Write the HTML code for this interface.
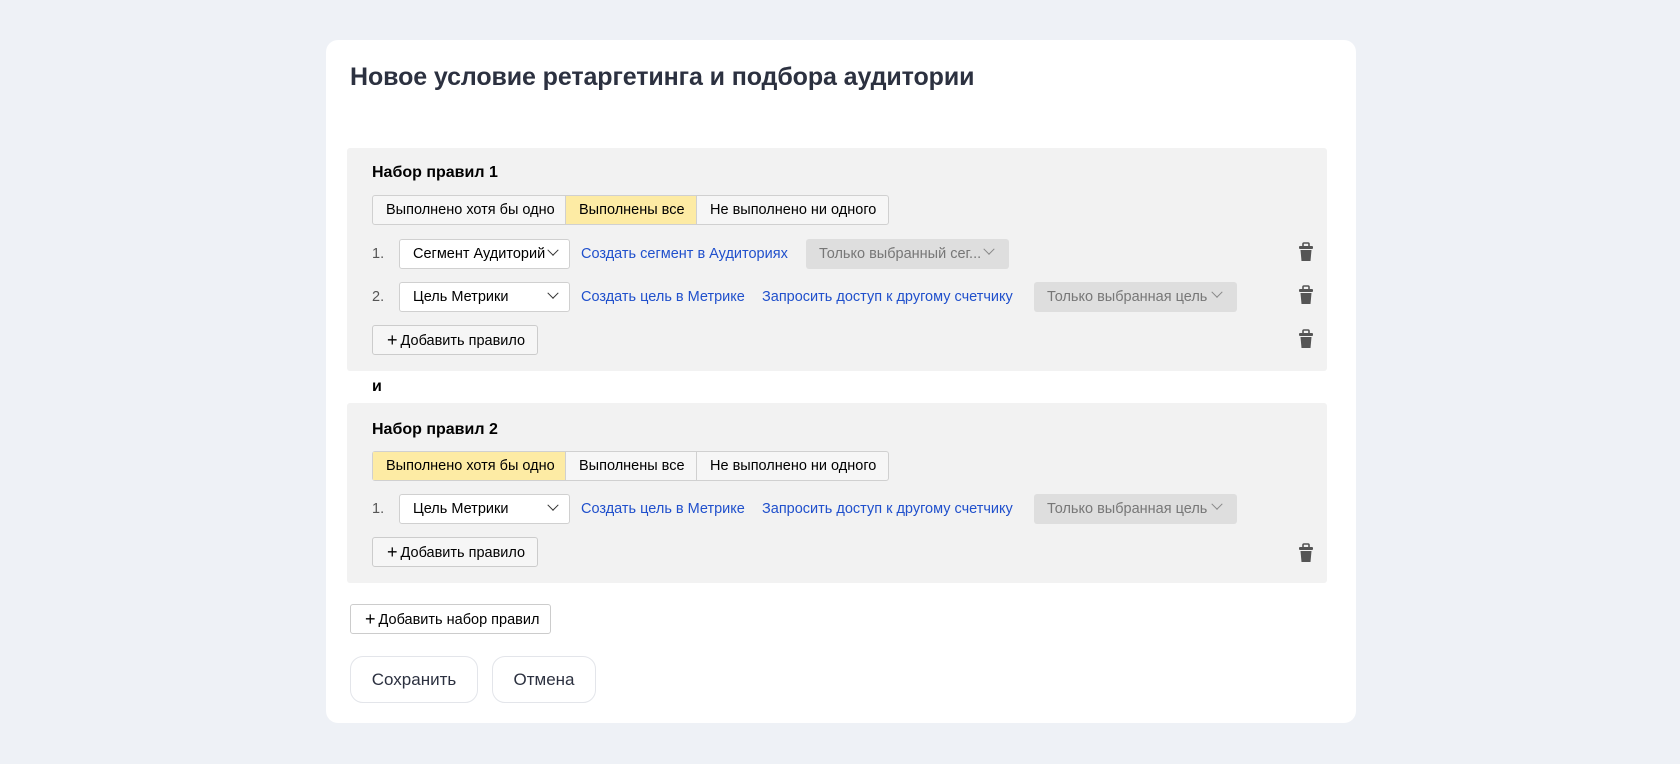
<!DOCTYPE html>
<html><head><meta charset="utf-8"><style>
*{box-sizing:border-box;margin:0;padding:0}
body{width:1680px;height:764px;background:#eef1f6;font-family:"Liberation Sans",sans-serif;position:relative;overflow:hidden;color:#000}
.a{position:absolute}
.card{left:326px;top:40px;width:1030px;height:683px;background:#fff;border-radius:12px}
.panel{left:347px;width:980px;background:#f2f2f2;border-radius:3px}
.title{left:350px;top:63px;font-size:25px;font-weight:bold;color:#2c3140;white-space:nowrap;letter-spacing:-0.1px}
.h{font-size:16px;font-weight:bold;left:372px}
.seg{height:30px;display:flex;left:372px;border:1px solid #d0d0d0;border-radius:3px;background:#f6f6f6;font-size:14.5px}
.seg div{padding:0 13px;line-height:28px;border-right:1px solid #d0d0d0;white-space:nowrap}
.seg div:last-child{border-right:0}
.seg .on{background:#fdeba4}
.sel{height:30px;background:#fff;border:1px solid #d0d0d0;border-radius:3px;font-size:14.5px;line-height:28px;padding-left:13px;left:399px;width:171px}
.chev{position:absolute;right:12px;top:9px;width:8px;height:8px;border-right:1.2px solid #333;border-bottom:1.2px solid #333;transform:rotate(45deg) translate(-2px,-2px)}
.num{left:372px;font-size:14.5px;color:#555}
.lnk{color:#2050cc;font-size:14.5px;white-space:nowrap}
.gs{height:30px;background:#dedede;border-radius:3px;font-size:14.5px;line-height:30px;padding-left:13px;color:#777;white-space:nowrap}
.gs .chev{border-color:#888}
.btn{height:30px;border:1px solid #ccc;border-radius:3px;background:#f6f6f6;font-size:14.5px;line-height:28px;padding-left:14px;white-space:nowrap}
.btn b{font-weight:normal;font-size:18px;vertical-align:-1px;margin-right:3px}
.big{height:47px;border:1px solid #e3e5ea;border-radius:13px;background:#fff;font-size:17px;color:#2c3140;text-align:center;line-height:45px}
</style></head><body>
<div class="a card"></div>
<div class="a title">Новое условие ретаргетинга и подбора аудитории</div>

<div class="a panel" style="top:148px;height:223px"></div>
<div class="a h" style="top:164px">Набор правил 1</div>
<div class="a seg" style="top:195px"><div style="width:193px">Выполнено хотя бы одно</div><div class="on" style="width:131px">Выполнены все</div><div style="width:191px">Не выполнено ни одного</div></div>
<div class="a num" style="top:246px">1.</div>
<div class="a sel" style="top:239px">Сегмент Аудиторий<span class="chev"></span></div>
<div class="a lnk" style="left:581px;top:246px">Создать сегмент в Аудиториях</div>
<div class="a gs" style="left:806px;top:239px;width:203px">Только выбранный сег...<span class="chev" style="right:16px"></span></div>
<div class="a num" style="top:289px">2.</div>
<div class="a sel" style="top:282px">Цель Метрики<span class="chev"></span></div>
<div class="a lnk" style="left:581px;top:289px">Создать цель в Метрике</div>
<div class="a lnk" style="left:762px;top:289px">Запросить доступ к другому счетчику</div>
<div class="a gs" style="left:1034px;top:282px;width:203px">Только выбранная цель<span class="chev" style="right:16px"></span></div>
<div class="a btn" style="left:372px;top:325px;width:166px"><b>+</b>Добавить правило</div>

<div class="a h" style="top:378px">и</div>

<div class="a panel" style="top:403px;height:180px"></div>
<div class="a h" style="top:421px">Набор правил 2</div>
<div class="a seg" style="top:451px"><div class="on" style="width:193px">Выполнено хотя бы одно</div><div style="width:131px">Выполнены все</div><div style="width:191px">Не выполнено ни одного</div></div>
<div class="a num" style="top:501px">1.</div>
<div class="a sel" style="top:494px">Цель Метрики<span class="chev"></span></div>
<div class="a lnk" style="left:581px;top:501px">Создать цель в Метрике</div>
<div class="a lnk" style="left:762px;top:501px">Запросить доступ к другому счетчику</div>
<div class="a gs" style="left:1034px;top:494px;width:203px">Только выбранная цель<span class="chev" style="right:16px"></span></div>
<div class="a btn" style="left:372px;top:537px;width:166px"><b>+</b>Добавить правило</div>

<svg class="a" style="left:0;top:0" width="1680" height="764">
<g fill="#555">
<g transform="translate(1299,243)"><rect x="0" y="3" width="14" height="3" rx="1"/><rect x="4" y="0" width="6" height="4" rx="1" fill="none" stroke="#555" stroke-width="1.6"/><path d="M1.5 7h11l-1 11h-9z"/></g>
<g transform="translate(1299,286)"><rect x="0" y="3" width="14" height="3" rx="1"/><rect x="4" y="0" width="6" height="4" rx="1" fill="none" stroke="#555" stroke-width="1.6"/><path d="M1.5 7h11l-1 11h-9z"/></g>
<g transform="translate(1299,330)"><rect x="0" y="3" width="14" height="3" rx="1"/><rect x="4" y="0" width="6" height="4" rx="1" fill="none" stroke="#555" stroke-width="1.6"/><path d="M1.5 7h11l-1 11h-9z"/></g>
<g transform="translate(1299,544)"><rect x="0" y="3" width="14" height="3" rx="1"/><rect x="4" y="0" width="6" height="4" rx="1" fill="none" stroke="#555" stroke-width="1.6"/><path d="M1.5 7h11l-1 11h-9z"/></g>
</g></svg>

<div class="a btn" style="left:350px;top:604px;width:201px;background:#fff"><b>+</b>Добавить набор правил</div>
<div class="a big" style="left:350px;top:656px;width:128px">Сохранить</div>
<div class="a big" style="left:492px;top:656px;width:104px">Отмена</div>
</body></html>
